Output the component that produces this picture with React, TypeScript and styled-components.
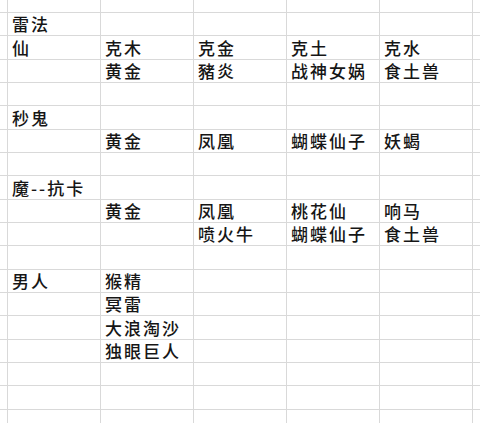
import * as React from 'react';
import styled, { createGlobalStyle } from 'styled-components';

const ROW_HEIGHT = 23.33;
const COL_WIDTH = 93;

const GlobalStyle = createGlobalStyle`
  html, body {
    margin: 0;
    padding: 0;
    background: #ffffff;
  }
`;

const Sheet = styled.div`
  width: 480px;
  height: 423px;
  overflow: hidden;
  display: grid;
  grid-template-columns: 8px repeat(5, ${COL_WIDTH}px) 1fr;
  grid-template-rows: 13px repeat(18, ${ROW_HEIGHT}px);
  font-family: "Noto Sans CJK SC", "Noto Sans", sans-serif;
  font-size: 17px;
  font-weight: 500;
  letter-spacing: 2px;
  color: #161616;
  background: #ffffff;
`;

const Cell = styled.div<{ $lastCol?: boolean }>`
  box-sizing: border-box;
  border-bottom: 1px solid #d9d9d9;
  border-right: ${({ $lastCol }) => ($lastCol ? 'none' : '1px solid #d9d9d9')};
  display: flex;
  align-items: flex-end;
  padding: 0 0 1px 4px;
  line-height: 20px;
  white-space: nowrap;
  overflow: visible;
`;

const rows: string[][] = [
  ['', '', '', '', ''],
  ['雷法', '', '', '', ''],
  ['仙', '克木', '克金', '克土', '克水'],
  ['', '黄金', '豬炎', '战神女娲', '食土兽'],
  ['', '', '', '', ''],
  ['秒鬼', '', '', '', ''],
  ['', '黄金', '凤凰', '蝴蝶仙子', '妖蝎'],
  ['', '', '', '', ''],
  ['魔--抗卡', '', '', '', ''],
  ['', '黄金', '凤凰', '桃花仙', '响马'],
  ['', '', '喷火牛', '蝴蝶仙子', '食土兽'],
  ['', '', '', '', ''],
  ['男人', '猴精', '', '', ''],
  ['', '冥雷', '', '', ''],
  ['', '大浪淘沙', '', '', ''],
  ['', '独眼巨人', '', '', ''],
  ['', '', '', '', ''],
  ['', '', '', '', ''],
  ['', '', '', '', ''],
];

const App: React.FC = () => (
  <>
    <GlobalStyle />
    <Sheet>
      {rows.map((row, r) => (
        <React.Fragment key={r}>
          <Cell />
          {row.map((text, c) => (
            <Cell key={c}>{text}</Cell>
          ))}
          <Cell $lastCol />
        </React.Fragment>
      ))}
    </Sheet>
  </>
);

export default App;
